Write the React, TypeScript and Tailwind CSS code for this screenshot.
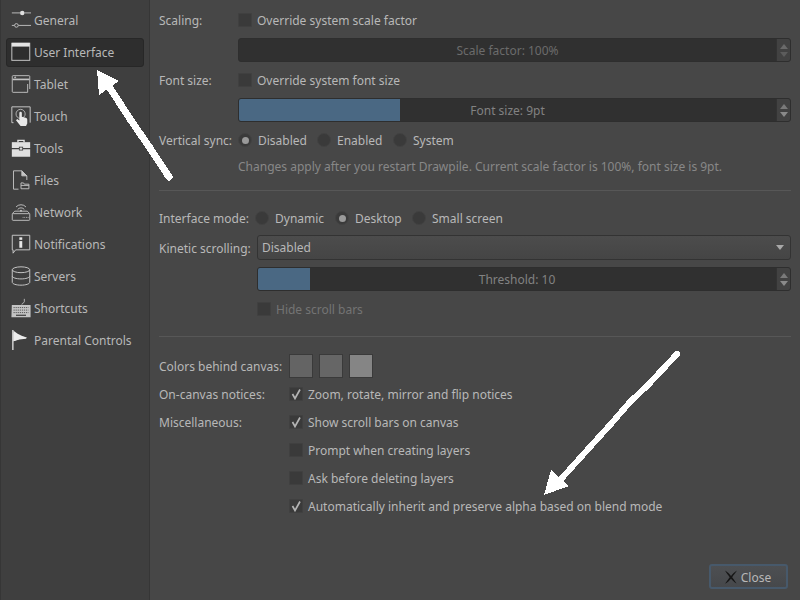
import React from "react";

const c = "#c4c4c4";
const Icons: Record<string, React.ReactNode> = {
  General: (
    <g fill="none" stroke={c} strokeWidth="1.1">
      <path d="M1 2.500h10M16 2.500h8M1 17.500h3M9 17.500h15" transform="translate(0 1)" />
      <circle cx="13.500" cy="3.500" r="2.700" fill="#e0e0e0" stroke="none" />
      <circle cx="6.500" cy="18.500" r="2.200" />
    </g>
  ),
  "User Interface": (
    <g fill="none" stroke={c} strokeWidth="1.200">
      <rect x="1" y="1.500" width="21.500" height="20.500" />
      <rect x="1" y="1" width="21.500" height="4.500" fill="#e4e4e4" stroke="none" />
    </g>
  ),
  Tablet: (
    <g fill="none" stroke={c} strokeWidth="1.100">
      <path d="M17 22H2.500a1 1 0 0 1-1-1V3a1 1 0 0 1 1-1h19a1 1 0 0 1 1 1v15" />
      <path d="M2 6.500h20" strokeWidth="2" />
      <path d="M20 12v10M16.500 22H20" />
      <circle cx="5" cy="4" r=".6" fill={c} />
    </g>
  ),
  Touch: (
    <g>
      <path d="M3 20H1V1h22v19" fill="none" stroke={c} strokeWidth="1.200" />
      <circle cx="11.500" cy="9.500" r="5.500" fill="none" stroke={c} />
      <path d="M10 8.500a1.500 1.500 0 0 1 3 0V13l4.500 1c1.500.4 2 1 2 2.500V21l-1.500 3H11.500L6 17l1.500-1.500 2.500 2z" fill="#e8e8e8" />
    </g>
  ),
  Tools: (
    <g fill="#e0e0e0">
      <path d="M7.500 5V2h9v3h-1.700V3.700H9.200V5z" />
      <rect x="1" y="5" width="22" height="7" />
      <rect x="1" y="13.500" width="22" height="9" />
      <rect x="9.500" y="10.500" width="5" height="4.500" fill="#3f3f3f" />
      <rect x="10.500" y="11.500" width="3" height="2.500" />
    </g>
  ),
  Files: (
    <g fill="none" stroke={c} strokeWidth="1.100">
      <path d="M9 23H3V1h10l6 6v5" />
      <path d="M13 1v6h6l-6-6z" fill={c} />
      <path d="M12 22.500V15.500h3l1 1.500h5.500v5.500z" />
      <path d="M12 18.500h9.500" />
    </g>
  ),
  Network: (
    <g fill="none" stroke={c} strokeWidth="1.100">
      <rect x="1.500" y="14" width="21" height="8" rx="1" />
      <path d="M1.500 14l3-3h15l3 3" />
      <path d="M6 6a8 8 0 0 1 12 0M8 9a5 5 0 0 1 8 0" />
      <path d="M14 18.500h1M16 18.500h1M18 18.500h1M20 18.500h1" />
      <circle cx="12" cy="10.500" r="1.100" fill={c} stroke="none" />
    </g>
  ),
  Notifications: (
    <g>
      <path d="M1.500 1.500h21v17.500H5.500l-3 4v-4h-1z" fill="none" stroke={c} strokeWidth="1.200" />
      <rect x="10" y="4" width="3.500" height="3" fill="#e8e8e8" />
      <rect x="10" y="8.500" width="3.500" height="8" fill="#e8e8e8" />
    </g>
  ),
  Servers: (
    <g fill="none" stroke={c} strokeWidth="1.200">
      <ellipse cx="12" cy="4.500" rx="10.500" ry="3.500" />
      <path d="M1.500 4.500v15c0 2 4.700 3.500 10.500 3.500s10.500-1.500 10.500-3.500v-15" />
      <path d="M1.500 12c0 2 4.700 3.500 10.500 3.500s10.500-1.500 10.500-3.500" />
    </g>
  ),
  Shortcuts: (
    <g>
      <path d="M13 8c0-2 3-2 3-3.500V1" fill="none" stroke={c} />
      <path d="M1 8.500h22.500V23H.500z" fill="#c4c4c4" />
      <path d="M3 11.500h18M3 14.500h18M3 17.500h18" stroke="#444" strokeWidth="1" strokeDasharray="1.500 1" />
      <rect x="6" y="20" width="12" height="1.500" fill="#444" />
    </g>
  ),
  "Parental Controls": (
    <g fill="#ececec">
      <rect x="1.500" y="0" width="1.500" height="24" />
      <path d="M3 1l5 3.500 6 3 5 1.500-6 .5-10 4z" />
      <path d="M3 3l7 4 9 2-1 1.500-8 1-7 2z" />
    </g>
  ),
};

const items = Object.keys(Icons);

function Sidebar() {
  return (
    <div className="w-[150px] shrink-0 h-full bg-[#3f3f3f] border-x border-[#363636] px-[5px] pt-[5px] flex flex-col">
      {items.map((name) => {
        const sel = name === "User Interface";
        return (
          <div key={name} className="h-[32px] pt-px shrink-0">
            <div
              className={`flex items-start w-full h-[29px] rounded-[3px] border pl-[4px] ${
                sel ? "bg-[#2e2e2e] border-[#272727]" : "border-transparent"
              }`}
            >
              <svg viewBox="0 0 24 24" className="w-[20px] h-[20px] mt-[3px] shrink-0 overflow-visible">
                {Icons[name]}
              </svg>
              <span className="ml-[3px] mt-[6px] text-[#b8b8b8]">{name}</span>
            </div>
          </div>
        );
      })}
    </div>
  );
}

function Check({ label, checked, disabled }: { label: string; checked?: boolean; disabled?: boolean }) {
  return (
    <div className="flex items-center h-[28px]">
      <div className="w-[14px] h-[14px] rounded-[1px] bg-[#3a3a3a] border border-[#404040] flex items-center justify-center shrink-0">
        {checked && (
          <svg viewBox="0 0 12 12" className="w-[12px] h-[12px]">
            <path d="M2.500 6L5 10.500 10 1.500" fill="none" stroke="#b4b4b4" strokeWidth="1.700" />
          </svg>
        )}
      </div>
      <span className={`ml-[5px] pt-[2px] ${disabled ? "text-[#747474]" : "text-[#b8b8b8]"}`}>{label}</span>
    </div>
  );
}

function Radio({ label, on, w }: { label: string; on?: boolean; w: string }) {
  return (
    <div className={`flex items-center h-[28px] ${w}`}>
      <div className="w-[14px] h-[14px] rounded-full bg-[#3a3a3a] border border-[#424242] flex items-center justify-center shrink-0">
        {on && <div className="w-[7px] h-[7px] rounded-full bg-[#9a9a9a]" />}
      </div>
      <span className="ml-[6px] pt-[2px] text-[#b8b8b8]">{label}</span>
    </div>
  );
}

function Slider({ text, pct, dim }: { text: string; pct?: string; dim?: boolean }) {
  return (
    <div className="relative flex-1 h-[24px] rounded-[3px] bg-[#303030] border border-[#2e2e2e] flex overflow-hidden">
      <div className="flex-1 relative flex items-center justify-center">
        {pct && <div className={`absolute left-0 top-0 bottom-0 bg-[#4a6883] ${pct}`} />}
        <span className={`relative pt-[2px] ${dim ? "text-[#6b6b6b]" : "text-[#828282]"}`}>{text}</span>
      </div>
      <div className="w-[14px] bg-[#424242] border-l border-[#333] flex flex-col items-center justify-center gap-[3px] shrink-0">
        <svg viewBox="0 0 8 5" className="w-[8px] h-[5px]">
          <path d="M0 5L4 0l4 5z" fill={dim ? "#6a6a6a" : "#7a7a7a"} />
        </svg>
        <svg viewBox="0 0 8 5" className="w-[8px] h-[5px]">
          <path d="M0 0l4 5 4-5z" fill={dim ? "#5c5c5c" : "#8a8a8a"} />
        </svg>
      </div>
    </div>
  );
}

function Label({ w, children }: { w: string; children: React.ReactNode }) {
  return <div className={`${w} shrink-0 pt-[2px] text-[#b8b8b8]`}>{children}</div>;
}

function Main() {
  return (
    <div className="relative flex-1 h-full bg-[#474747] px-[9px] pt-[6px] flex flex-col">
      {/* Group 1 */}
      <div className="flex items-center">
        <Label w="w-[79px]">Scaling:</Label>
        <Check label="Override system scale factor" />
      </div>
      <div className="flex pl-[79px] mt-[4px]">
        <Slider text="Scale factor: 100%" dim />
      </div>
      <div className="flex items-center mt-[4px]">
        <Label w="w-[79px]">Font size:</Label>
        <Check label="Override system font size" />
      </div>
      <div className="flex pl-[79px] mt-[4px]">
        <Slider text="Font size: 9pt" pct="w-[30%]" />
      </div>
      <div className="flex items-center mt-[4px]">
        <Label w="w-[79px]">Vertical sync:</Label>
        <Radio label="Disabled" on w="w-[79px]" />
        <Radio label="Enabled" w="w-[76px]" />
        <Radio label="System" w="w-[80px]" />
      </div>
      <div className="pl-[79px] mt-[5px] h-[15px] leading-[16px] text-[#888888]">
        Changes apply after you restart Drawpile. Current scale factor is 100%, font size is 9pt.
      </div>
      <div className="h-px bg-[#575757] mt-[16px] shrink-0" />

      {/* Group 2 */}
      <div className="flex items-center mt-[13px]">
        <Label w="w-[96px]">Interface mode:</Label>
        <Radio label="Dynamic" w="w-[80px]" />
        <Radio label="Desktop" on w="w-[77px]" />
        <Radio label="Small screen" w="w-[100px]" />
      </div>
      <div className="flex items-center mt-[3px]">
        <Label w="w-[98px]">Kinetic scrolling:</Label>
        <div className="flex-1 h-[25px] rounded-[3px] bg-gradient-to-b from-[#4c4c4c] to-[#454545] border border-[#333] flex items-center pl-[4px] pr-[6px] text-[#b8b8b8]">
          <span className="flex-1">Disabled</span>
          <svg viewBox="0 0 8 5" className="w-[8px] h-[5px]">
            <path d="M0 0l4 5 4-5z" fill="#a8a8a8" />
          </svg>
        </div>
      </div>
      <div className="flex pl-[98px] mt-[7px]">
        <Slider text="Threshold: 10" pct="w-[10%]" />
      </div>
      <div className="flex pl-[98px] mt-[4px]">
        <Check label="Hide scroll bars" disabled />
      </div>
      <div className="h-px bg-[#575757] mt-[13px] shrink-0" />

      {/* Group 3 */}
      <div className="flex items-center mt-[17px]">
        <Label w="w-[130px]">Colors behind canvas:</Label>
        <div className="flex gap-[6px]">
          <div className="w-[24px] h-[24px] bg-[#646464] border border-[#3a3a3a]" />
          <div className="w-[24px] h-[24px] bg-[#666666] border border-[#3a3a3a]" />
          <div className="w-[24px] h-[24px] bg-[#858585] border border-[#3a3a3a]" />
        </div>
      </div>
      <div className="flex items-center mt-[2px]">
        <Label w="w-[130px]">On-canvas notices:</Label>
        <Check label="Zoom, rotate, mirror and flip notices" checked />
      </div>
      <div className="flex items-center">
        <Label w="w-[130px]">Miscellaneous:</Label>
        <Check label="Show scroll bars on canvas" checked />
      </div>
      <div className="flex pl-[130px]">
        <Check label="Prompt when creating layers" />
      </div>
      <div className="flex pl-[130px]">
        <Check label="Ask before deleting layers" />
      </div>
      <div className="flex pl-[130px]">
        <Check label="Automatically inherit and preserve alpha based on blend mode" checked />
      </div>

      <div className="mt-auto flex justify-end pb-[11px] pr-[3px]">
        <button className="w-[79px] h-[25px] rounded-[3px] bg-gradient-to-b from-[#4d4f52] to-[#46484b] border-2 border-[#47596b] flex items-center justify-center pr-[2px] text-[#b8b8b8]">
          <svg viewBox="0 0 14 14" className="w-[14px] h-[14px] mr-[3px]">
            <path d="M1 0.500c2.500 1.500 4.500 3.500 6 5.500 1.500-2 3.500-4 6-5.500-1.500 2.500-3.500 4.500-4.800 6.800 1.300 2 3 4 4.300 6.200-2.200-1.200-4-3-5.500-4.800-1.500 1.800-3.500 3.600-6 5 1.500-2.200 3.200-4.200 4.700-6.400C4.200 5 2.300 3 1 0.500z" fill="#161616" />
          </svg>
          <span className="pt-[2px]">Close</span>
        </button>
      </div>
    </div>
  );
}

export default function App() {
  return (
    <div
      className="relative w-[800px] h-[600px] overflow-hidden flex text-[12px] leading-[16px] bg-[#474747]"
      style={{ fontFamily: '"Noto Sans", sans-serif' }}
    >
      <Sidebar />
      <Main />
      <svg className="absolute inset-0 w-[800px] h-[600px] pointer-events-none" viewBox="0 0 800 600" shapeRendering="crispEdges">
        <path d="M169 177L150 148 130 119 110 88" stroke="#fff" strokeWidth="7" strokeLinecap="round" strokeLinejoin="round" fill="none" />
        <path d="M97 70L119 81 99 95z" fill="#fff" />
        <path d="M677 354L648 385 630 402 610 425 590 447 562 478" stroke="#fff" strokeWidth="6" strokeLinecap="round" strokeLinejoin="round" fill="none" />
        <path d="M544 495L551 470 569 486z" fill="#fff" />
      </svg>
    </div>
  );
}
